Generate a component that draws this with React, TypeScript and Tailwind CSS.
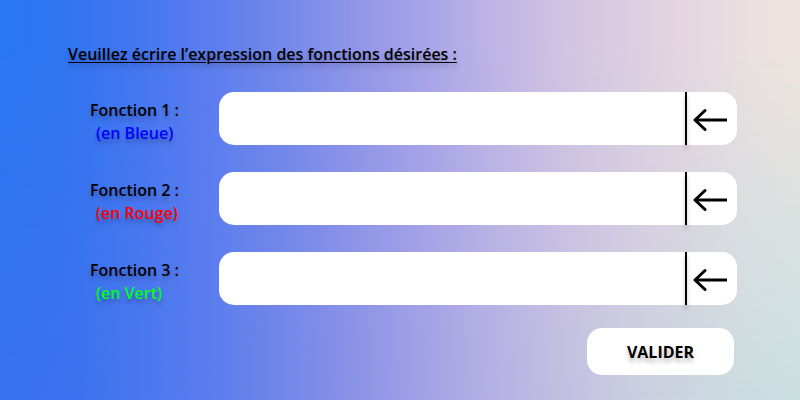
import { useState, type FormEvent } from "react";

type Field = { id: string; label: string; hint: string; color: string };

const fields: Field[] = [
  { id: "f1", label: "Fonction 1 :", hint: "(en Bleue)", color: "text-[#0000ff]" },
  { id: "f2", label: "Fonction 2 :", hint: "(en Rouge)", color: "text-[#ff0000]" },
  { id: "f3", label: "Fonction 3 :", hint: "(en Vert)", color: "text-[#00ff19]" },
];

function BackArrow() {
  return (
    <svg width="34" height="24" viewBox="0 0 34 24" fill="none" stroke="#000" strokeWidth="3" aria-hidden="true">
      <path d="M34 12H2" />
      <path d="M12 2.5L2 12L12 21.5" strokeLinecap="round" strokeLinejoin="round" />
    </svg>
  );
}

function FunctionRow({ field }: { field: Field }) {
  const [value, setValue] = useState("");
  return (
    <div className="flex h-[53px]">
      <label
        htmlFor={field.id}
        className="w-[129px] shrink-0 pt-[7px] leading-[23px] [text-shadow:0_4px_4px_rgba(0,0,0,0.25)]"
      >
        <span className="block">{field.label}</span>
        <span className={`block pl-[6px] ${field.color}`}>{field.hint}</span>
      </label>
      <div className="flex flex-1 rounded-[15px] bg-white">
        <input
          id={field.id}
          type="text"
          value={value}
          onChange={(e) => setValue(e.target.value)}
          className="min-w-0 flex-1 rounded-l-[15px] bg-transparent px-4 outline-none"
        />
        <span className="w-[2px] bg-black shadow-[0_4px_4px_rgba(0,0,0,0.25)]" />
        <button
          type="button"
          aria-label="Effacer"
          onClick={() => setValue("")}
          className="flex w-[50px] items-center pt-[2px] pl-[6px]"
        >
          <BackArrow />
        </button>
      </div>
    </div>
  );
}

export default function App() {
  const submit = (e: FormEvent) => e.preventDefault();
  return (
    <main className="relative isolate min-h-screen bg-[linear-gradient(90deg,#3772f1_0%,#3c72f0_9%,#4a77ef_17%,#5a7dee_26%,#6f85ea_34%,#8791e8_43%,#a0a0e6_52%,#b4b0e4_61%,#c2bfe2_70%,#ccd0e0_81%,#cbdce0_92%,#c9e0e2_100%)] font-['Open_Sans',sans-serif] text-[16px] font-semibold text-black">
      <div className="absolute inset-0 -z-10 bg-[linear-gradient(90deg,#2a76f3_0%,#2f75f2_8%,#4476f1_17%,#5e7eee_27%,#7589ea_36%,#8f95e8_44%,#aaa5e8_54%,#bfb5e5_62%,#d5c7e2_73%,#e4d5df_85%,#ebe0e0_94%,#eee3de_100%)] [mask-image:linear-gradient(180deg,#000_0%,#000_10%,transparent_100%)]" />
      <form onSubmit={submit} className="pt-[42px] pr-[63px] pl-[90px]">
        <h1 className="-ml-[22px] leading-[24px] underline decoration-1 underline-offset-2 [text-shadow:0_4px_4px_rgba(0,0,0,0.25)]">
          Veuillez écrire l’expression des fonctions désirées :
        </h1>
        <div className="mt-[26px] flex flex-col gap-[27px]">
          {fields.map((f) => (
            <FunctionRow key={f.id} field={f} />
          ))}
        </div>
        <div className="mt-[23px] flex justify-end pr-[3px]">
          <button
            type="submit"
            className="h-[47px] w-[147px] rounded-[15px] bg-white font-bold [text-shadow:0_4px_4px_rgba(0,0,0,0.25)]"
          >
            VALIDER
          </button>
        </div>
      </form>
    </main>
  );
}
